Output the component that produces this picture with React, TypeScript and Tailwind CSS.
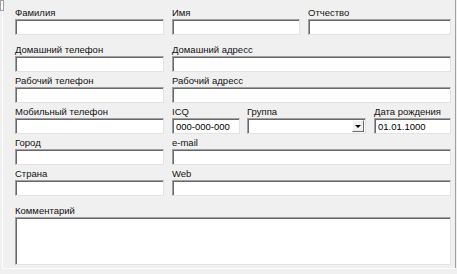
import React from "react";

const inputBox =
  "border-t border-l border-[#a0a0a0] border-b border-r border-b-[#e3e3e3] border-r-[#e3e3e3] bg-white shadow-[inset_1px_1px_0_#696969]";

function Field({ label, value, className = "" }: { label: string; value?: string; className?: string }) {
  return (
    <div className={"flex flex-col " + className}>
      <div className="h-[15px] pt-[3px] text-[9.5px] leading-[12px] text-[#111] whitespace-nowrap">{label}</div>
      <div className={"h-[16px] px-[3px] pt-[2px] text-[9.5px] leading-[11px] text-black whitespace-nowrap overflow-hidden " + inputBox}>
        {value}
      </div>
    </div>
  );
}

function Combo({ label, className = "" }: { label: string; className?: string }) {
  return (
    <div className={"flex flex-col " + className}>
      <div className="h-[15px] pt-[3px] text-[9.5px] leading-[12px] text-[#111] whitespace-nowrap">{label}</div>
      <div className={"h-[16px] flex justify-end items-stretch p-[1px] pl-[2px] " + inputBox}>
        <div className="w-[12px] bg-[#f0f0f0] border border-t-white border-l-white border-b-[#696969] border-r-[#696969] flex items-center justify-center">
          <div className="w-0 h-0 border-l-[3px] border-r-[3px] border-t-[3px] border-l-transparent border-r-transparent border-t-black" />
        </div>
      </div>
    </div>
  );
}

export default function App() {
  return (
    <div className="relative w-[457px] h-[274px] overflow-hidden bg-[#f0f0f0] font-['Liberation_Sans',Arial,sans-serif]">
      {/* window frame pieces */}
      <div className="absolute left-0 top-0 w-[4px] h-[11px] border border-[#a0a0a0] bg-white" />
      <div className="absolute left-[2px] top-[11px] bottom-[5px] w-px bg-[#fdfdfd]" />
      <div className="absolute right-[1px] top-0 bottom-[5px] w-px bg-[#a0a0a0]" />
      <div className="absolute left-[2px] right-[1px] bottom-[5px] h-px bg-[#fdfdfd]" />

      <div className="flex flex-col pl-[15px] pr-[6px] pt-[4px]">
        <div className="flex gap-[8px]">
          <Field label="Фамилия" className="w-[149px]" />
          <Field label="Имя" className="w-[128px]" />
          <Field label="Отчество" className="flex-1" />
        </div>
        <div className="flex gap-[8px] mt-[6px]">
          <Field label="Домашний телефон" className="w-[149px]" />
          <Field label="Домашний адресс" className="flex-1" />
        </div>
        <div className="flex gap-[8px]">
          <Field label="Рабочий телефон" className="w-[149px]" />
          <Field label="Рабочий адресс" className="flex-1" />
        </div>
        <div className="flex gap-[8px]">
          <Field label="Мобильный телефон" className="w-[149px]" />
          <Field label="ICQ" value="000-000-000" className="w-[68px]" />
          <Combo label="Группа" className="w-[119px] -ml-[1px]" />
          <Field label="Дата рождения" value="01.01.1000" className="flex-1" />
        </div>
        <div className="flex gap-[8px]">
          <Field label="Город" className="w-[149px]" />
          <Field label="e-mail" className="flex-1" />
        </div>
        <div className="flex gap-[8px]">
          <Field label="Страна" className="w-[149px]" />
          <Field label="Web" className="flex-1" />
        </div>
        <div className="flex flex-col mt-[6px]">
          <div className="h-[15px] pt-[3px] text-[9.5px] leading-[12px] text-[#111]">Комментарий</div>
          <div className={"h-[48px] " + inputBox} />
        </div>
      </div>
    </div>
  );
}
